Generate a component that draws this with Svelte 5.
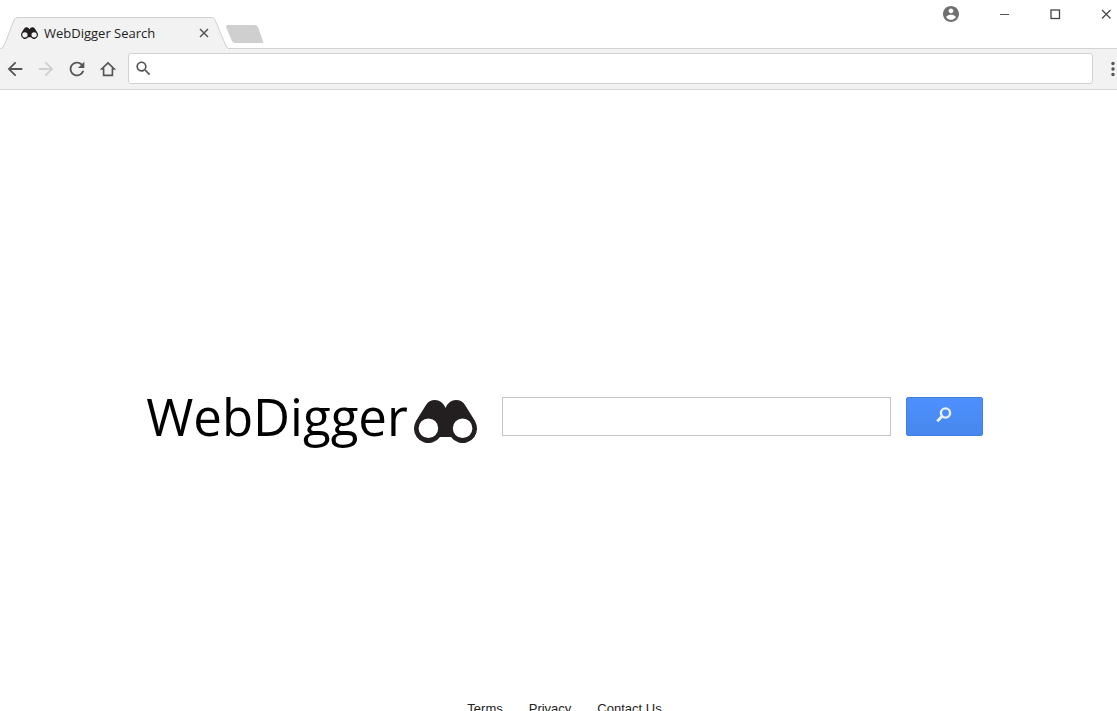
<script lang="ts">
  let address = $state('')
  let query = $state('')

  const links = ['Terms', 'Privacy', 'Contact Us']
</script>

{#snippet binoculars()}
  <svg class="binoculars" viewBox="0 0 63 43" aria-hidden="true">
    <path
      fill="#231f20"
      fill-rule="evenodd"
      d="M2 21 L12 5 Q15 0 21 0 Q28 0 31.500 8 Q35 0 42 0 Q48 0 51 5 L61 21 Q63 25 63 28.500 A14.300 14.300 0 0 1 37 37 H26 A14.300 14.300 0 0 1 0 28.500 Q0 25 2 21 Z M14.400 18.400 a9.800 9.800 0 1 0 0 19.600 a9.800 9.800 0 1 0 0 -19.600 Z M48.600 18.400 a9.800 9.800 0 1 0 0 19.600 a9.800 9.800 0 1 0 0 -19.600 Z"
    />
  </svg>
{/snippet}

<div class="browser">
  <header class="tabstrip">
    <div class="tab">
      <svg class="tab-shape" viewBox="0 0 229 32" aria-hidden="true">
        <path d="M0 31.500 Q3 31.500 4 29 L14 3 Q15 .5 18 .5 H211 Q214 .5 215 3 L226 29 Q227 31.500 229 31.500 V32 H0 Z" fill="#f2f2f2" />
        <path d="M0 31.500 Q3 31.500 4 29 L14 3 Q15 .5 18 .5 H211 Q214 .5 215 3 L226 29 Q227 31.500 229 31.500" fill="none" stroke="#d0d0d0" />
      </svg>
      <span class="favicon">{@render binoculars()}</span>
      <span class="title">WebDigger Search</span>
      <button class="close" aria-label="Close tab">
        <svg viewBox="0 0 10 10"><path d="M1 1 L9 9 M9 1 L1 9" stroke="#555" stroke-width="1.500" /></svg>
      </button>
    </div>
    <button class="new-tab" aria-label="New tab">
      <svg viewBox="0 0 38 18"><path d="M2 0 H29 Q31 0 32 2 L37 16 Q38 18 36 18 H9 Q7 18 6 16 L0 2 Q0 0 2 0 Z" fill="#cfcfcf" /></svg>
    </button>
    <div class="window-controls">
      <button aria-label="Profile">
        <svg viewBox="2 2 20 20">
          <path fill="#707070" d="M12 2C6.480 2 2 6.480 2 12s4.480 10 10 10 10-4.480 10-10S17.520 2 12 2zm0 3c1.660 0 3 1.340 3 3s-1.340 3-3 3-3-1.340-3-3 1.340-3 3-3zm0 14.200c-2.500 0-4.710-1.280-6-3.220.03-1.990 4-3.080 6-3.080 1.990 0 5.970 1.090 6 3.080-1.290 1.940-3.500 3.220-6 3.220z" />
        </svg>
      </button>
      <button aria-label="Minimize">
        <svg viewBox="0 0 16 16"><path d="M4 8.500 H13" stroke="#555" /></svg>
      </button>
      <button aria-label="Maximize">
        <svg viewBox="0 0 16 16"><rect x="4" y="4" width="8.500" height="8.500" fill="none" stroke="#444" stroke-width="1.300" /></svg>
      </button>
      <button aria-label="Close window">
        <svg viewBox="0 0 16 16"><path d="M4 4 L12.500 12.500 M12.500 4 L4 12.500" stroke="#444" stroke-width="1.200" /></svg>
      </button>
    </div>
  </header>

  <nav class="toolbar" aria-label="Browser">
    <button aria-label="Back">
      <svg viewBox="0 0 24 24"><path fill="#555" d="M20 11H7.830l5.590-5.590L12 4l-8 8 8 8 1.410-1.410L7.830 13H20v-2z" /></svg>
    </button>
    <button aria-label="Forward" disabled>
      <svg viewBox="0 0 24 24"><path fill="#d0d0d0" d="M12 4l-1.410 1.410L16.170 11H4v2h12.170l-5.580 5.590L12 20l8-8z" /></svg>
    </button>
    <button aria-label="Reload">
      <svg viewBox="0 0 24 24"><path fill="#555" d="M17.650 6.350C16.200 4.900 14.210 4 12 4c-4.420 0-7.990 3.580-7.990 8s3.570 8 7.990 8c3.730 0 6.840-2.550 7.730-6h-2.080c-.82 2.330-3.040 4-5.650 4-3.310 0-6-2.690-6-6s2.690-6 6-6c1.660 0 3.140.69 4.220 1.780L13 11h7V4l-2.350 2.350z" /></svg>
    </button>
    <button aria-label="Home">
      <svg viewBox="0 0 24 24"><path fill="none" stroke="#555" stroke-width="1.800" d="M12 5.300 L5.200 12 H7.200 V19 H16.800 V12 H18.800 Z" /></svg>
    </button>
    <label class="address">
      <svg viewBox="0 0 24 24" aria-hidden="true">
        <path fill="#555" d="M15.500 14h-.79l-.28-.27C15.410 12.590 16 11.110 16 9.500 16 5.910 13.090 3 9.500 3S3 5.910 3 9.500 5.910 16 9.500 16c1.610 0 3.090-.59 4.230-1.570l.27.28v.79l5 4.990L20.490 19l-4.990-5zm-6 0C7.010 14 5 11.990 5 9.500S7.010 5 9.500 5 14 7.010 14 9.500 11.990 14 9.500 14z" />
      </svg>
      <input type="text" aria-label="Address" bind:value={address} />
    </label>
    <button class="menu" aria-label="Menu">
      <svg viewBox="0 0 6 22">
        <g fill="#555"><circle cx="3" cy="5.500" r="1.700" /><circle cx="3" cy="11" r="1.700" /><circle cx="3" cy="16.500" r="1.700" /></g>
      </svg>
    </button>
  </nav>

  <div class="page">
    <main>
      <h1 class="logo">WebDigger{@render binoculars()}</h1>
      <form class="search" onsubmit={(e) => e.preventDefault()}>
        <input type="text" aria-label="Search the web" bind:value={query} />
        <button aria-label="Search">
          <svg viewBox="0 0 16 16">
            <circle cx="9.500" cy="6" r="4.600" fill="none" stroke="#e8f1ff" stroke-width="2.400" />
            <path d="M6.200 9.300 L1.200 14.300" stroke="#e8f1ff" stroke-width="2.800" />
          </svg>
        </button>
      </form>
    </main>
    <footer>
      {#each links as link}
        <a href="#{link}">{link}</a>
      {/each}
    </footer>
  </div>
</div>

<style>
  :global(body) { margin: 0; background: #fff; }
  * { box-sizing: border-box; }
  svg { display: block; }
  button { padding: 0; border: 0; background: none; }
  input { min-width: 0; font: 16px "Open Sans", sans-serif; outline: 0; }

  .browser {
    display: flex; flex-direction: column;
    height: 100vh; overflow: hidden;
  }

  .tabstrip {
    display: flex; flex-shrink: 0; align-items: flex-start;
    height: 49px; border-bottom: 1px solid #d2d2d2;
  }
  .tab {
    position: relative;
    display: flex; align-items: center;
    width: 229px; height: 32px; margin-top: 17px; padding: 0 20px 0 21px;
  }
  .tab-shape { position: absolute; inset: 0; width: 229px; height: 32px; }
  .favicon { position: relative; width: 17px; }
  .favicon .binoculars { width: 17px; height: 12px; }
  .title {
    position: relative; flex: 1; margin-left: 6px;
    font: 13px/20px "Open Sans", sans-serif; color: #222;
  }
  .close { position: relative; }
  .close svg { width: 10px; height: 10px; }
  .new-tab { margin: 25px 0 0 -3px; }
  .new-tab svg { width: 38px; height: 18px; }
  .window-controls {
    display: flex; align-items: center; gap: 35px;
    margin: 6px 3px 0 auto;
  }
  .window-controls svg { width: 16px; height: 16px; }
  .window-controls button:first-child { margin-right: 2px; }

  .toolbar {
    display: flex; flex-shrink: 0; align-items: center; gap: 9px;
    height: 41px; padding: 0 1px 1px 4px;
    background: #f2f2f2; border-bottom: 1px solid #d8d8d8;
  }
  .toolbar svg { width: 22px; height: 22px; }
  .address {
    display: flex; flex: 1; align-items: center;
    height: 31px; padding-left: 5px;
    background: #fff; border: 1px solid #d2d2d2; border-radius: 3px;
  }
  .address svg { width: 19px; height: 19px; }
  .address input { flex: 1; margin: 0 8px; border: 0; background: none; }
  .toolbar .menu { margin-left: 8px; }
  .toolbar .menu svg { width: 6px; }

  .page { flex: 1; }
  main {
    display: flex; align-items: center; justify-content: center; gap: 25px;
    padding: 291px 0 250px 12px;
  }
  .logo {
    display: flex; align-items: center; gap: 6px;
    margin: 0;
    font: 400 51px/70px "Open Sans", sans-serif; color: #000;
  }
  .logo .binoculars { width: 63px; height: 43px; margin-top: 10px; }
  .search { display: flex; gap: 15px; }
  .search input {
    width: 389px; height: 39px; padding: 0 10px;
    border: 1px solid #c4c4c4;
  }
  .search button {
    display: flex; align-items: center; justify-content: center;
    width: 77px; height: 39px;
    background: linear-gradient(#4d90fe, #4787ed);
    border: 1px solid #3f7fe8; border-radius: 2px;
  }
  .search button svg { width: 16px; height: 16px; margin-bottom: 2px; }

  footer {
    display: flex; justify-content: center; gap: 26px;
    padding-left: 12px;
    font: 13px/16px "Liberation Sans", Arial, sans-serif;
  }
  footer a { color: #222; text-decoration: none; }
</style>
